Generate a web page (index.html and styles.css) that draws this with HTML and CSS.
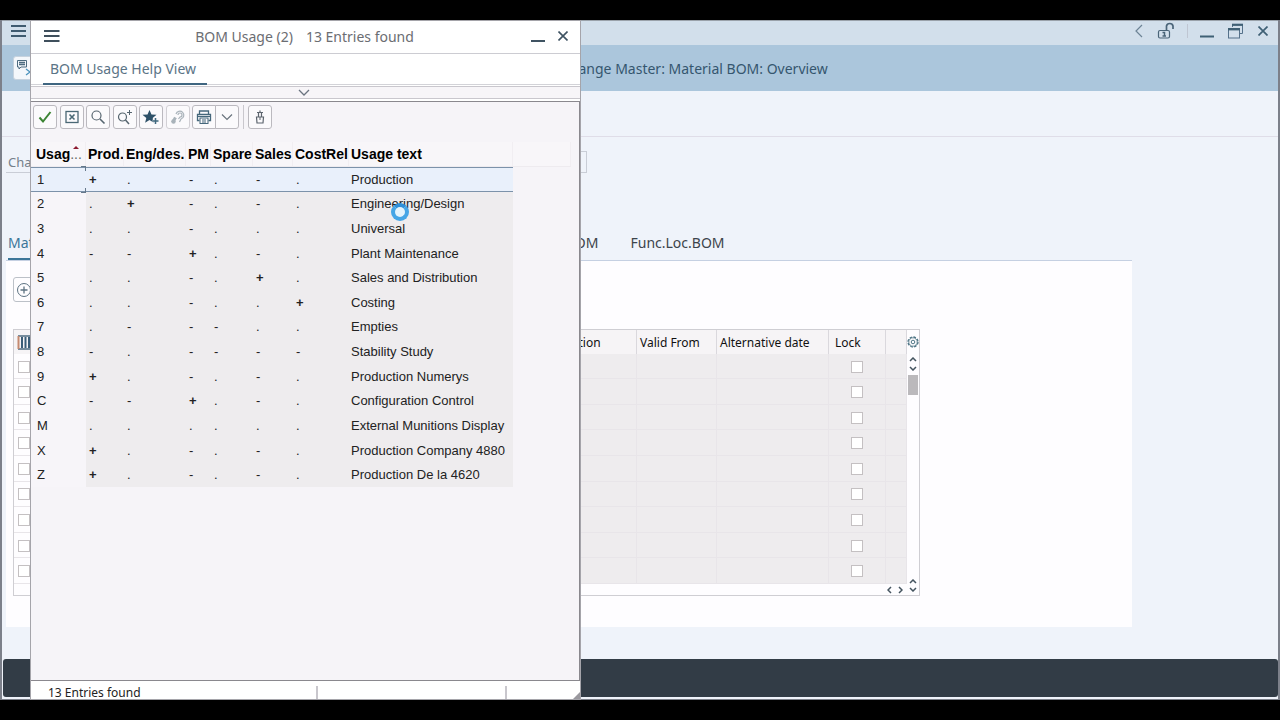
FILE: index.html
```html
<!DOCTYPE html>
<html lang="en">

<head>
    <meta charset="UTF-8">
    <meta name="viewport" content="width=device-width, initial-scale=1.0">
    <title>Change Master: Material BOM: Overview</title>
    <link rel="stylesheet" href="styles.css">
</head>

<body>
    <div class="app">
        <header class="window-bar">
            <button class="icon-btn" aria-label="Menu">
                <svg width="16" height="14" viewBox="0 0 16 14"><path d="M0 2h15M0 7h15M0 12h15" stroke="#3f5b70" stroke-width="2"/></svg>
            </button>
            <div class="window-controls">
                <button class="icon-btn" aria-label="Back">
                    <svg width="8" height="14" viewBox="0 0 8 14"><path d="M7 1L1 7l6 6" fill="none" stroke="#6d8496" stroke-width="1.2"/></svg>
                </button>
                <button class="icon-btn lock" aria-label="Unlock">
                    <svg width="18" height="18" viewBox="0 0 18 18" fill="none" stroke="#4a6478"><rect x="1.5" y="8.500" width="11" height="7.500" rx="1.500" stroke-width="1.200"/><path d="M9.500 8V4a3.300 3 0 0 1 6.500 0v3" stroke-width="1.700"/><path d="M5.500 10.500H7.500V14M5.500 14h3.500" stroke-width="1.500"/></svg>
                </button>
                <span class="divider"></span>
                <button class="icon-btn" aria-label="Minimize">
                    <svg width="14" height="16" viewBox="0 0 14 16"><path d="M0 13.500h14" stroke="#3f6075" stroke-width="2"/></svg>
                </button>
                <button class="icon-btn restore" aria-label="Restore">
                    <svg width="16" height="16" viewBox="0 0 16 16" fill="none" stroke="#55718a"><path d="M4.500 4V1.500h10v9H12"/><path d="M4 1.800h11" stroke-width="2.200" stroke="#3f6075"/><rect x=".5" y="5.500" width="11" height="9.500"/><path d="M0 6.200h12" stroke-width="2.400" stroke="#3f6075"/></svg>
                </button>
                <button class="icon-btn" aria-label="Close">
                    <svg width="10" height="10" viewBox="0 0 10 10"><path d="M.5.5l9 9M9.500.5l-9 9" stroke="#3f6075" stroke-width="1.700"/></svg>
                </button>
            </div>
        </header>

        <div class="title-bar">
            <button class="note-btn" aria-label="Services for object">
                <svg width="18" height="18" viewBox="0 0 18 18" fill="none" stroke="#4d6b80"><path d="M1.500 1.500h9v6.500H5l-2 2V8H1.500z"/><path d="M3 3.500h6M3 5.500h6" stroke-width="1.300"/><path d="M10 10l4 3-4 3" stroke="#4c93bd" stroke-width="1.300"/></svg>
            </button>
            <h1>Change Master: Material BOM: Overview</h1>
        </div>
        <div class="app-toolbar"></div>

        <main class="content">
            <div class="change-field">
                <label for="change-number">Change No.</label>
                <input type="text" id="change-number">
            </div>

            <nav class="tabs">
                <a href="#material" class="tab active">Material</a>
                <a href="#order" class="tab order-tab">Order BOM</a>
                <a href="#func-loc" class="tab">Func.Loc.BOM</a>
            </nav>

            <section class="panel">
                <button class="add-btn" aria-label="Add">
                    <svg width="16" height="16" viewBox="0 0 16 16" fill="none" stroke="#5d7383"><circle cx="8" cy="8" r="6.500"/><path d="M8 4.500v7M4.500 8h7" stroke-width="1.300"/></svg>
                </button>

                <div class="grid-box">
                    <table class="bom-table">
                        <colgroup>
                            <col class="col-select"><col><col class="col-desc"><col class="col-valid"><col class="col-alt"><col class="col-lock"><col class="col-end">
                        </colgroup>
                        <thead>
                            <tr>
                                <th class="select-all"><svg width="14" height="16" viewBox="0 0 14 16"><path d="M1 2h13M1 15h13" stroke="#4d6b80" stroke-width="1.500"/><path d="M1.500 2v13" stroke="#c58a70" stroke-width="2"/><path d="M5 3v11M8.500 3v11M12 3v11" stroke="#3b5e78" stroke-width="2"/></svg></th>
                                <th></th>
                                <th>Description</th>
                                <th>Valid From</th>
                                <th>Alternative date</th>
                                <th class="lock-head">Lock</th>
                                <th></th>
                            </tr>
                        </thead>
                        <tbody>
                            <tr><td><input type="checkbox" aria-label="Select row 1"></td><td></td><td></td><td></td><td></td><td><input type="checkbox" aria-label="Lock row 1"></td><td></td></tr>
                            <tr><td><input type="checkbox" aria-label="Select row 2"></td><td></td><td></td><td></td><td></td><td><input type="checkbox" aria-label="Lock row 2"></td><td></td></tr>
                            <tr><td><input type="checkbox" aria-label="Select row 3"></td><td></td><td></td><td></td><td></td><td><input type="checkbox" aria-label="Lock row 3"></td><td></td></tr>
                            <tr><td><input type="checkbox" aria-label="Select row 4"></td><td></td><td></td><td></td><td></td><td><input type="checkbox" aria-label="Lock row 4"></td><td></td></tr>
                            <tr><td><input type="checkbox" aria-label="Select row 5"></td><td></td><td></td><td></td><td></td><td><input type="checkbox" aria-label="Lock row 5"></td><td></td></tr>
                            <tr><td><input type="checkbox" aria-label="Select row 6"></td><td></td><td></td><td></td><td></td><td><input type="checkbox" aria-label="Lock row 6"></td><td></td></tr>
                            <tr><td><input type="checkbox" aria-label="Select row 7"></td><td></td><td></td><td></td><td></td><td><input type="checkbox" aria-label="Lock row 7"></td><td></td></tr>
                            <tr><td><input type="checkbox" aria-label="Select row 8"></td><td></td><td></td><td></td><td></td><td><input type="checkbox" aria-label="Lock row 8"></td><td></td></tr>
                            <tr><td><input type="checkbox" aria-label="Select row 9"></td><td></td><td></td><td></td><td></td><td><input type="checkbox" aria-label="Lock row 9"></td><td></td></tr>
                        </tbody>
                    </table>
                    <div class="v-scroll">
                        <button class="settings-btn" aria-label="Table settings">
                            <svg width="12" height="12" viewBox="0 0 12 12" fill="none" stroke="#4f7585"><circle cx="6" cy="6" r="5" stroke-width="1.300" stroke-dasharray="2.600 1.300"/><circle cx="6" cy="6" r="4.200" stroke-width=".8"/><circle cx="6" cy="6" r="1.800"/></svg>
                        </button>
                        <button class="icon-btn" aria-label="Scroll up"><svg width="8" height="5" viewBox="0 0 8 5"><path d="M1 4l3-3 3 3" fill="none" stroke="#44545f" stroke-width="1.500"/></svg></button>
                        <button class="icon-btn" aria-label="Line down"><svg width="8" height="5" viewBox="0 0 8 5"><path d="M1 1l3 3 3-3" fill="none" stroke="#44545f" stroke-width="1.500"/></svg></button>
                        <span class="thumb"></span>
                        <button class="icon-btn last-up" aria-label="Line up"><svg width="8" height="5" viewBox="0 0 8 5"><path d="M1 4l3-3 3 3" fill="none" stroke="#44545f" stroke-width="1.500"/></svg></button>
                    </div>
                    <div class="h-scroll">
                        <button class="icon-btn" aria-label="Scroll left"><svg width="5" height="8" viewBox="0 0 5 8"><path d="M4 1L1 4l3 3" fill="none" stroke="#44545f" stroke-width="1.500"/></svg></button>
                        <button class="icon-btn" aria-label="Scroll right"><svg width="5" height="8" viewBox="0 0 5 8"><path d="M1 1l3 3-3 3" fill="none" stroke="#44545f" stroke-width="1.500"/></svg></button>
                    </div>
                    <div class="scroll-corner">
                        <button class="icon-btn" aria-label="Scroll down"><svg width="8" height="5" viewBox="0 0 8 5"><path d="M1 1l3 3 3-3" fill="none" stroke="#44545f" stroke-width="1.500"/></svg></button>
                    </div>
                </div>
            </section>
        </main>

        <footer class="app-footer"></footer>
    </div>

    <div class="dialog" role="dialog" aria-labelledby="dialog-title">
        <div class="dialog-head">
            <button class="icon-btn" aria-label="Dialog menu">
                <svg width="16" height="14" viewBox="0 0 16 14"><path d="M0 2h15.500M0 7h15.500M0 12h15.500" stroke="#3f4f5c" stroke-width="2"/></svg>
            </button>
            <h2 id="dialog-title"><span>BOM Usage (2)</span><span>13 Entries found</span></h2>
            <button class="icon-btn" aria-label="Minimize dialog">
                <svg width="14" height="14" viewBox="0 0 14 14"><path d="M0 12h14" stroke="#3f5362" stroke-width="2"/></svg>
            </button>
            <button class="icon-btn" aria-label="Close dialog">
                <svg width="10" height="10" viewBox="0 0 10 10"><path d="M.5.5l9 9M9.500.5l-9 9" stroke="#3f5362" stroke-width="1.600"/></svg>
            </button>
        </div>
        <div class="dialog-tabs">
            <a href="#help-view">BOM Usage Help View</a>
        </div>
        <button class="expand-strip" aria-label="Show restrictions">
            <svg width="12" height="7" viewBox="0 0 12 7"><path d="M1 1l5 5 5-5" fill="none" stroke="#6b7480" stroke-width="1.300"/></svg>
        </button>

        <div class="dialog-body">
            <div class="toolbar">
                <div class="tool-group">
                    <button aria-label="Copy"><svg width="16" height="16" viewBox="0 0 16 16"><path d="M2.500 8.500l3.500 4 7.500-9.500" fill="none" stroke="#3c8434" stroke-width="2"/></svg></button>
                    <button aria-label="Cancel"><svg width="16" height="16" viewBox="0 0 16 16" fill="none" stroke="#4a6875"><rect x="2" y="2.500" width="12" height="11" stroke-width="1.300"/><path d="M5.500 5.500l5 5M10.500 5.500l-5 5" stroke-width="1.600"/></svg></button>
                    <button aria-label="Find"><svg width="16" height="16" viewBox="0 0 16 16" fill="none" stroke="#56656f"><circle cx="6.500" cy="6.500" r="4.500" stroke-width="1.200"/><path d="M10 10l4.500 4.500" stroke-width="1.600"/></svg></button>
                    <button aria-label="Find next"><svg width="16" height="16" viewBox="0 0 16 16" fill="none" stroke="#56656f"><circle cx="5.500" cy="8" r="4" stroke-width="1.200"/><path d="M8.500 11l3.500 4" stroke-width="1.500"/><path d="M12.500 1v5M10 3.500h5"/></svg></button>
                    <button aria-label="Add to favorites"><svg width="18" height="16" viewBox="0 0 18 16"><path d="M7.500 1l2 4.500 5 .3-3.800 3.200 1.200 4.700-4.400-2.700-4.400 2.700 1.200-4.700L.5 5.800l5-.3z" fill="#2f5269"/><path d="M13.500 9v6M10.500 12h6" stroke="#f7f5f8" stroke-width="3"/><path d="M13.500 9v6M10.500 12h6" stroke="#3f687e" stroke-width="1.500"/></svg></button>
                    <button aria-label="Remove value" disabled><svg width="16" height="16" viewBox="0 0 16 16" fill="none" stroke="#a9b3ba"><path d="M6 5a4 4 0 1 1 5 5l-1.500 3M8 6a2 2 0 1 1 2 2L8.500 10" stroke-width="1.200"/><path d="M5.500 8.500l-3 5" stroke-width="3"/><circle cx="3.500" cy="12.500" r="2.200" fill="#a9b3ba" stroke="none"/></svg></button>
                    <div class="split-btn">
                        <button aria-label="Print"><svg width="16" height="16" viewBox="0 0 16 16" fill="none" stroke="#45677b"><path d="M3.500 5V2h9v3M3.500 11.500h-2v-6h13v6h-2" stroke-width="1.300"/><rect x="4" y="9" width="8" height="5.500"/><path d="M2 7.500h12M6 11h4M6 13h4"/></svg></button>
                        <button aria-label="Print options"><svg width="12" height="8" viewBox="0 0 12 8"><path d="M1 1.500l5 5 5-5" fill="none" stroke="#6a747d" stroke-width="1.200"/></svg></button>
                    </div>
                </div>
                <span class="tool-sep"></span>
                <button aria-label="Pin"><svg width="12" height="16" viewBox="0 0 12 16" fill="none" stroke="#5d656e"><path d="M6 1.500v2M3 3.500h6M4.500 3.500V8h3V3.500M2.500 8h7L9 14H3z" stroke-width="1.200"/><path d="M6 8v3"/></svg></button>
            </div>

            <table class="usage-table">
                <colgroup>
                    <col class="w-usage"><col class="w-prod"><col class="w-eng"><col class="w-pm"><col class="w-spare"><col class="w-sales"><col class="w-cost"><col class="w-text"><col>
                </colgroup>
                <thead>
                    <tr><th>Usag<span class="dots">...</span><i class="sort-mark"></i></th><th>Prod.</th><th>Eng/des.</th><th>PM</th><th>Spare</th><th>Sales</th><th>CostRel</th><th>Usage text</th><th></th></tr>
                </thead>
                <tbody>
                    <tr class="selected"><td>1</td><td><b>+</b></td><td>.</td><td>-</td><td>.</td><td>-</td><td>.</td><td>Production</td></tr>
                    <tr><td>2</td><td>.</td><td><b>+</b></td><td>-</td><td>.</td><td>-</td><td>.</td><td>Engineering/Design</td></tr>
                    <tr><td>3</td><td>.</td><td>.</td><td>-</td><td>.</td><td>.</td><td>.</td><td>Universal</td></tr>
                    <tr><td>4</td><td>-</td><td>-</td><td><b>+</b></td><td>.</td><td>-</td><td>.</td><td>Plant Maintenance</td></tr>
                    <tr><td>5</td><td>.</td><td>.</td><td>-</td><td>.</td><td><b>+</b></td><td>.</td><td>Sales and Distribution</td></tr>
                    <tr><td>6</td><td>.</td><td>.</td><td>-</td><td>.</td><td>.</td><td><b>+</b></td><td>Costing</td></tr>
                    <tr><td>7</td><td>.</td><td>-</td><td>-</td><td>-</td><td>.</td><td>.</td><td>Empties</td></tr>
                    <tr><td>8</td><td>-</td><td>.</td><td>-</td><td>-</td><td>-</td><td>-</td><td>Stability Study</td></tr>
                    <tr><td>9</td><td><b>+</b></td><td>.</td><td>-</td><td>.</td><td>-</td><td>.</td><td>Production Numerys</td></tr>
                    <tr><td>C</td><td>-</td><td>-</td><td><b>+</b></td><td>.</td><td>-</td><td>.</td><td>Configuration Control</td></tr>
                    <tr><td>M</td><td>.</td><td>.</td><td>.</td><td>.</td><td>.</td><td>.</td><td>External Munitions Display</td></tr>
                    <tr><td>X</td><td><b>+</b></td><td>.</td><td>-</td><td>.</td><td>-</td><td>.</td><td>Production Company 4880</td></tr>
                    <tr><td>Z</td><td><b>+</b></td><td>.</td><td>-</td><td>.</td><td>-</td><td>.</td><td>Production De la 4620</td></tr>
                </tbody>
            </table>
        </div>

        <div class="status-bar">
            <span class="status-text">13 Entries found</span>
            <span class="status-cell"></span>
            <span class="status-grip"></span>
        </div>
        <span class="busy-ring"></span>
    </div>
</body>

</html>
```
FILE: styles.css
```css
* {
    box-sizing: border-box;
}

body {
    margin: 0;
    padding: 20px 0;
    height: 100vh;
    background: #000;
    color: #32363a;
    font-family: "Noto Sans", sans-serif;
    font-size: 12px;
    position: relative;
}

button {
    margin: 0;
    padding: 0;
    font: inherit;
    cursor: pointer;
    display: flex;
    align-items: center;
    justify-content: center;
}

a {
    text-decoration: none;
}

.icon-btn {
    background: none;
    border: none;
}

/* Main window */
.app {
    height: 100%;
    display: flex;
    flex-direction: column;
    background: #eff3fa;
    border: solid #7c808a;
    border-width: 0 2px 1px;
}

.window-bar {
    height: 25px;
    flex: none;
    display: flex;
    align-items: center;
    justify-content: space-between;
    padding: 0 10px 4px 9px;
    background: #d2dfeb;
    border-top: 1px solid #9aa2aa;
}

.window-controls {
    display: flex;
    align-items: center;
    gap: 14px;
}

.divider {
    width: 1px;
    height: 14px;
    margin: 0 -2px;
    background: #bfc6d2;
}

.title-bar {
    height: 46px;
    flex: none;
    display: flex;
    align-items: center;
    padding-left: 11px;
    background: #abc6dc;
}

.note-btn {
    width: 24px;
    height: 24px;
    background: #f4f7fb;
    border: 1px solid #c6d2de;
    border-radius: 3px;
}

.title-bar h1 {
    margin: 0 0 0 524px;
    font-size: 14px;
    font-weight: normal;
    color: #35566f;
    white-space: nowrap;
}

.app-toolbar {
    height: 46px;
    flex: none;
    border-bottom: 1px solid #dfdde8;
}

.content {
    flex: 1;
    padding: 14px 146px 0 4px;
}

.change-field {
    display: flex;
    align-items: center;
    gap: 8px;
    width: 581px;
    height: 22px;
    padding-left: 2px;
    font-size: 13px;
    color: #74808a;
    border-bottom: 1px solid #c9cdd6;
}

.change-field input {
    flex: 1;
    min-width: 0;
    height: 22px;
    background: transparent;
    border: 1px solid #c9cdd6;
}

.tabs {
    display: flex;
    margin-top: 52px;
    padding: 0 2px;
    font-size: 14px;
    border-bottom: 1px solid #c5d0e2;
}

.tab {
    height: 35px;
    line-height: 35px;
    margin-right: 32px;
    color: #3c444b;
    white-space: nowrap;
}

.tab.active {
    color: #3b7699;
    border-bottom: 2px solid #3b7699;
}

.order-tab {
    margin-left: 429px;
}

.panel {
    height: 366px;
    padding: 16px 212px 0 7px;
    background: #fefdff;
}

.add-btn {
    width: 22px;
    height: 25px;
    background: #fefdff;
    border: 1px solid #bcc1c8;
    border-radius: 3px;
}

.grid-box {
    display: grid;
    grid-template-columns: 1fr 12px;
    margin-top: 27px;
    border: 1px solid #cfced3;
    background: #fefdff;
}

.bom-table {
    width: 100%;
    height: 254px;
    border-collapse: collapse;
    table-layout: fixed;
}

.bom-table th {
    height: 24px;
    padding: 0 3px;
    text-align: left;
    font-weight: normal;
    color: #111;
    background: #f6f4f6;
    border-right: 1px solid #dad8dd;
    white-space: nowrap;
}

.bom-table td {
    padding: 1px 0 0;
    text-align: center;
    background: #eeecee;
    border-right: 1px solid #e8e5e9;
    border-bottom: 1px solid #e8e5e9;
}

.bom-table td:first-child {
    background: #fefdff;
}

.bom-table .select-all svg {
    display: block;
}

.bom-table .lock-head {
    padding-left: 6px;
}

.bom-table input {
    appearance: none;
    display: block;
    width: 12px;
    height: 12px;
    margin: 0 auto;
    background: #fff;
    border: 1px solid #c4c0c2;
}

.bom-table td:first-child input {
    margin-left: 4px;
}

.col-select {
    width: 24px;
}

.col-desc {
    width: 104px;
}

.col-valid {
    width: 80px;
}

.col-alt {
    width: 112px;
}

.col-lock {
    width: 57px;
}

.col-end {
    width: 21px;
}

.v-scroll {
    display: flex;
    flex-direction: column;
    align-items: center;
    gap: 4px;
}

.settings-btn {
    width: 12px;
    height: 23px;
    background: none;
    border: none;
}

.thumb {
    width: 10px;
    height: 20px;
    background: #bbb9bc;
}

.last-up {
    margin-top: auto;
}

.h-scroll {
    height: 11px;
    display: flex;
    align-items: center;
    justify-content: flex-end;
    gap: 6px;
    padding-right: 4px;
}

.scroll-corner {
    display: flex;
    align-items: center;
    justify-content: center;
}

.app-footer {
    flex: none;
    height: 38px;
    margin: 0 0 2px 1px;
    background: #323c46;
    border-radius: 3px;
}

/* Value help dialog */
.dialog {
    position: absolute;
    top: 20px;
    bottom: 20px;
    left: 30px;
    width: 551px;
    display: flex;
    flex-direction: column;
    background: #fff;
    border: 1px solid #a5a4aa;
}

.dialog-head {
    height: 33px;
    flex: none;
    display: flex;
    align-items: center;
    gap: 20px;
    padding: 0 12px 2px 13px;
    border-bottom: 1px solid #ccccd2;
}

.dialog-head h2 {
    flex: 1;
    display: flex;
    justify-content: center;
    gap: 13px;
    margin: 0;
    padding-left: 18px;
    font-size: 14px;
    font-weight: normal;
    color: #6b6d72;
}

.dialog-head .icon-btn + .icon-btn {
    margin-left: -7px;
}

.dialog-tabs {
    height: 31px;
    flex: none;
    display: flex;
    padding-left: 12px;
    border-bottom: 1px solid #d3d3d8;
}

.dialog-tabs a {
    height: 31px;
    padding: 0 11px 0 7px;
    line-height: 29px;
    font-size: 14px;
    color: #5b7486;
    border-bottom: 2px solid #3f6580;
}

.expand-strip {
    height: 13px;
    flex: none;
    margin: 1px 0 2px;
    padding-right: 4px;
    background: #f7f5f8;
    border: solid #c9c7cd;
    border-width: 1px 0;
}

.dialog-body {
    flex: 1;
    background: #f6f4f8;
    border: solid #8a888e;
    border-width: 1px 1px 1px 0;
}

.toolbar {
    display: flex;
    align-items: center;
    gap: 4px;
    height: 40px;
    padding: 0 2px 10px;
}

.toolbar button {
    width: 24px;
    height: 24px;
    background: #fbfafc;
    border: 1px solid #bbb9bf;
    border-radius: 3px;
}

.toolbar button:disabled {
    border-color: #d2d0d5;
    cursor: default;
}

.tool-group {
    display: flex;
    justify-content: space-between;
    width: 206px;
}

.split-btn {
    display: flex;
}

.split-btn button:first-child {
    border-radius: 3px 0 0 3px;
}

.split-btn button:last-child {
    margin-left: -1px;
    border-radius: 0 3px 3px 0;
}

.tool-sep {
    width: 1px;
    height: 24px;
    background: #c9c7cd;
}

.usage-table {
    width: 540px;
    height: 345px;
    border-collapse: separate;
    border-spacing: 0;
    table-layout: fixed;
    font-family: "Liberation Sans", Arial, sans-serif;
    font-size: 13px;
    color: #222;
}

.usage-table th {
    position: relative;
    height: 25px;
    padding: 0 0 0 2px;
    text-align: left;
    font-size: 14px;
    color: #000;
    white-space: nowrap;
    overflow: hidden;
    background: #f8f6f9;
    border-right: 1px solid #f1eef2;
    border-bottom: 1px solid #eeebef;
}

.usage-table td {
    padding: 0 0 0 3px;
    white-space: nowrap;
    background: #eeecee;
}

.usage-table td:last-child {
    padding-left: 2px;
}

.usage-table th:first-child {
    padding-left: 5px;
}

.usage-table td:first-child {
    padding-left: 6px;
    background: #f7f5f9;
}

.usage-table .selected td {
    background: #e9f0fb;
    box-shadow: inset 0 1px #7c92aa, inset 0 -1px #7c92aa;
}

/* Corner marks of the focused cell */
.usage-table .selected td:first-child {
    position: relative;
}

.usage-table .selected td:first-child::before,
.usage-table .selected td:first-child::after {
    content: "";
    position: absolute;
    right: 0;
    width: 4px;
    height: 4px;
    border: solid #66788a;
}

.usage-table .selected td:first-child::before {
    top: -1px;
    border-width: 1px 1px 0 0;
}

.usage-table .selected td:first-child::after {
    bottom: -1px;
    border-width: 0 1px 1px 0;
}

.dots {
    font-weight: normal;
    color: #666;
}

.sort-mark {
    position: absolute;
    top: 4px;
    right: 6px;
    border: solid transparent;
    border-width: 0 3px 3px;
    border-bottom-color: #8c1a30;
}

.w-usage {
    width: 55px;
}

.w-prod {
    width: 38px;
}

.w-eng {
    width: 62px;
}

.w-pm {
    width: 25px;
}

.w-spare {
    width: 42px;
}

.w-sales {
    width: 40px;
}

.w-cost {
    width: 56px;
}

.w-text {
    width: 164px;
}

.status-bar {
    height: 18px;
    flex: none;
    display: flex;
    align-items: flex-end;
    color: #222;
}

.status-text {
    width: 287px;
    padding-left: 17px;
    border-right: 2px solid #c9c7cd;
    height: 13px;
    display: flex;
    align-items: center;
}

.status-cell {
    width: 189px;
    height: 13px;
    border-right: 2px solid #c9c7cd;
}

.status-grip {
    margin-left: auto;
    border: solid transparent;
    border-width: 0 0 7px 7px;
    border-bottom-color: #9a989e;
}

/* Busy pointer over the list */
.busy-ring {
    position: absolute;
    top: 182px;
    left: 360px;
    width: 18px;
    height: 18px;
    border: 4px solid #45a5e6;
    border-top-color: #2f8fd8;
    border-radius: 50%;
    background: #e4f3fc;
}
```
